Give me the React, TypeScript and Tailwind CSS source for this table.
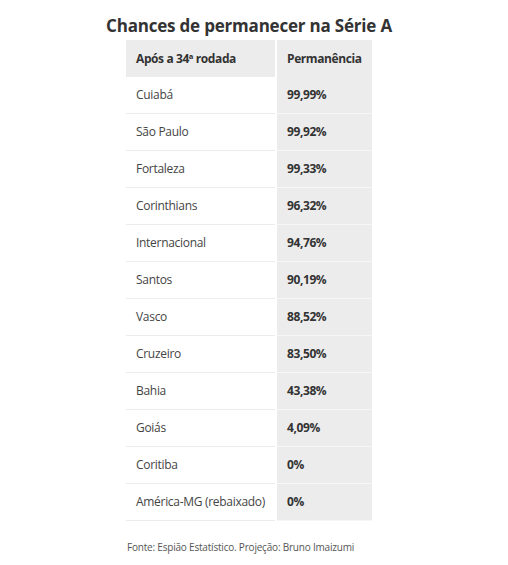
const rows: [string, string][] = [
  ["Cuiabá", "99,99%"],
  ["São Paulo", "99,92%"],
  ["Fortaleza", "99,33%"],
  ["Corinthians", "96,32%"],
  ["Internacional", "94,76%"],
  ["Santos", "90,19%"],
  ["Vasco", "88,52%"],
  ["Cruzeiro", "83,50%"],
  ["Bahia", "43,38%"],
  ["Goiás", "4,09%"],
  ["Coritiba", "0%"],
  ["América-MG (rebaixado)", "0%"],
];

export default function App() {
  return (
    <main
      className="w-[498px] h-[565px] bg-white flex flex-col items-center text-[#333]"
      style={{ fontFamily: '"Open Sans", "Liberation Sans", sans-serif' }}
    >
      <h1 className="mt-[11px] h-[29px] text-[17px] font-bold leading-[29px] tracking-[-0.2px] text-[#333] whitespace-nowrap">
        Chances de permanecer na Série A
      </h1>

      {/* tabela */}
      <div className="w-[246px] flex flex-col">
        <div className="flex h-[37px] text-[12px] font-bold tracking-[-0.4px]">
          <div className="w-[149px] bg-[#ececec] pl-[10px] flex items-center">Após a 34ª rodada</div>
          <div className="w-[2px]" />
          <div className="flex-1 bg-[#ececec] pl-[10px] flex items-center">Permanência</div>
        </div>
        {rows.map(([team, pct]) => (
          <div key={team} className="flex h-[37px] text-[12px]">
            <div className="w-[149px] pl-[10px] flex items-center border-b border-[#ececec] tracking-[-0.3px] whitespace-nowrap text-[#444]">
              {team}
            </div>
            <div className="w-[2px]" />
            <div className="flex-1 bg-[#ececec] pl-[10px] flex items-center font-bold tracking-[-0.4px] border-b border-[#f6f6f6]">
              {pct}
            </div>
          </div>
        ))}
      </div>

      <p className="mt-[19px] w-[246px] pl-[1px] text-[10px] text-[#555] tracking-[-0.2px] whitespace-nowrap">
        Fonte: Espião Estatístico. Projeção: Bruno Imaizumi
      </p>
    </main>
  );
}
